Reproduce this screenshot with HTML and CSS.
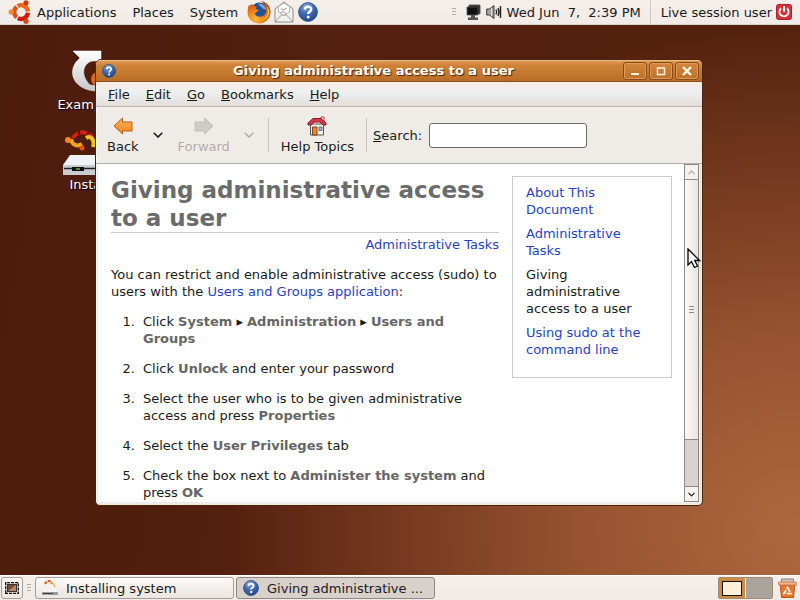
FILE: index.html
```html
<!DOCTYPE html>
<html lang="en">
<head>
<meta charset="utf-8">
<title>Giving administrative access to a user</title>
<link rel="stylesheet" href="styles.css">
</head>
<body>
<svg class="defs" aria-hidden="true">
  <defs>
    <radialGradient id="blue" cx=".4" cy=".2" r=".9"><stop offset="0" stop-color="#86a8d8"/><stop offset=".5" stop-color="#3c67ae"/><stop offset="1" stop-color="#1d3f80"/></radialGradient>
    <radialGradient id="fire" cx=".35" cy=".8" r=".9"><stop offset="0" stop-color="#f9b934"/><stop offset=".5" stop-color="#e8771a"/><stop offset="1" stop-color="#b63c0c"/></radialGradient>
    <linearGradient id="arrow" x2="0" y2="1"><stop offset="0" stop-color="#fbb45c"/><stop offset="1" stop-color="#f0821a"/></linearGradient>
    <linearGradient id="metal" x2="0" y2="1"><stop offset="0" stop-color="#ffffff"/><stop offset="1" stop-color="#c4c6ca"/></linearGradient>
    <symbol id="help" viewBox="0 0 20 20">
      <circle cx="10" cy="10" r="9.3" fill="url(#blue)" stroke="#274a83" stroke-width="1"/>
      <path d="M6.8 7.6C7 3.6 13.4 3.8 13.2 7.6C13.1 9.8 10.2 9.8 10.2 12" fill="none" stroke="#fff" stroke-width="2.4"/>
      <circle cx="10.2" cy="15" r="1.5" fill="#fff"/>
    </symbol>
    <symbol id="ubuntu" viewBox="0 0 24 24">
      <g fill="none" stroke-width="4.4">
        <path d="M9.6 6.1A7 7 0 0 1 20 11.4" stroke="#ea6a1c"/>
        <path d="M20 12.8A7 7 0 0 1 9.8 18.1" stroke="#cf1a12"/>
        <path d="M8.6 17.4A7 7 0 0 1 8.6 6.8" stroke="#d9551f"/>
      </g>
      <circle cx="3.2" cy="12" r="2.6" fill="#f08b2a"/>
      <circle cx="18" cy="2.8" r="2.6" fill="#cf3a12"/>
      <circle cx="18" cy="21.2" r="2.6" fill="#d9451a"/>
    </symbol>
    <symbol id="chevron" viewBox="0 0 10 6"><path d="M.7.7L5 5L9.3.7" fill="none" stroke="currentColor" stroke-width="1.6"/></symbol>
  </defs>
</svg>

<header class="panel panel-top">
  <nav class="menus">
    <svg class="ubuntu-logo"><use href="#ubuntu"/></svg>
    <button class="menu">Applications</button>
    <button class="menu">Places</button>
    <button class="menu">System</button>
  </nav>
  <div class="launchers">
    <button class="launcher" aria-label="Firefox">
      <svg viewBox="0 0 24 24"><circle cx="12.5" cy="12" r="9.5" fill="#27509a"/><path d="M11 4C15 3 19 6 19 10C16 9 14 7 11 4Z" fill="#6fa9dc"/><path d="M2 5C3 6 4 5 5 4C6 6 9 6 10 7C8 8 9 10 12 10C11 12 8 12 8 14C10 18 17 18 19 12C20 8 18 4 14 1C20 2 24 7 23.5 13C22.500 20 17 24 11.500 23.500C5 23 .5 18 .6 12C.7 9 1 7 2 5Z" fill="url(#fire)"/><path d="M19.500 6C22 12 21 17 15 20C20 19 23 15 22 10Z" fill="#fbd54a"/></svg>
    </button>
    <button class="launcher launcher-mail" aria-label="Mail">
      <svg viewBox="0 0 20 22"><path d="M1 8L10 1L19 8V21H1Z" fill="#f2f1ee" stroke="#8d8d88"/><path d="M4.500 10V5.500L10 2L15.500 5.500V11L10 14.500L4.500 11Z" fill="#fff" stroke="#aaa9a4" stroke-width=".8"/><path d="M1 21L7.500 14H12.500L19 21M6.500 7L9 9L13 7M6 12L9 10.500L13 13" fill="none" stroke="#9b9a95"/></svg>
    </button>
    <button class="launcher" aria-label="Help"><svg viewBox="0 0 20 20"><use href="#help"/></svg></button>
  </div>
  <div class="tray">
    <span class="grip"></span>
    <svg class="tray-icon" viewBox="0 0 16 18" role="img" aria-label="Network"><path d="M4 2H15V11H4Z" fill="#1c1c1c" stroke="#666"/><path d="M2 4H13V12H2Z" fill="#111" stroke="#555" stroke-width=".8"/><path d="M6 12H10V14.500H13V17H3V14.500H6Z" fill="#555"/></svg>
    <svg class="tray-icon tray-volume" viewBox="0 0 16 16" role="img" aria-label="Volume"><path d="M.7 5H3.500L8 1.500V14.500L3.500 11H.7Z" fill="#a5a59f" stroke="#3b3b38"/><path d="M5.500 4V12" stroke="#ddd"/><path d="M10 5.500Q11.300 8 10 10.500M12 4Q14 8 12 12M14.500 2V14" fill="none" stroke="#222" stroke-width="1.400"/></svg>
    <time class="clock">Wed Jun  7,  2:39 PM</time>
    <button class="session">Live session user
      <svg viewBox="0 0 16 16" aria-hidden="true"><rect x=".5" y=".5" width="15" height="15" rx="2" fill="#d6303a" stroke="#b11d2a"/><path d="M5 4.300A4.600 4.600 0 1 0 11 4.300" fill="none" stroke="#fff" stroke-width="1.800"/><path d="M8 2V8" stroke="#fff" stroke-width="2"/></svg>
    </button>
  </div>
</header>

<main class="desktop">
  <div class="shortcut shortcut-examples">
    <svg viewBox="0 0 48 42"><path d="M8 1H36V11H28C19 12 14 24 25 35L32 36V41C14 41 1 27 11 12L15 8Z" fill="url(#metal)" stroke="#eee" stroke-width=".6"/><circle cx="33" cy="29" r="7" fill="#e0661c"/></svg>
    <span>Examples</span>
  </div>
  <div class="shortcut shortcut-install">
    <svg viewBox="0 0 54 46"><g fill="none" stroke-width="4"><path d="M11 8C16 0 25 1 31 8" stroke="#d51d10" stroke-dasharray="7 2"/><path d="M9 9C10 15 15 17 20 14" stroke="#f0a51c"/><path d="M24 8C29 5 33 10 31 17" stroke="#f2c31e"/></g><circle cx="6" cy="10" r="3" fill="#f08a1c"/><circle cx="20" cy="18" r="2.500" fill="#e8500f"/><path d="M8 25H46L54 35H1Z" fill="#f1f2f4"/><path d="M1 35H54V45H1Z" fill="#c9ccd0"/><path d="M2 38.500H52" stroke="#20242a" stroke-width="1.500"/><rect x="10" y="37" width="12" height="4" fill="#111"/><path d="M14 39H18" stroke="#4f8a3c" stroke-width="2"/></svg>
    <span>Install</span>
  </div>

  <section class="window">
    <div class="titlebar">
      <svg class="title-icon"><use href="#help"/></svg>
      <h1 class="title">Giving administrative access to a user</h1>
      <div class="window-buttons">
        <button aria-label="Minimize"><svg viewBox="0 0 12 12"><path d="M2 9H10" stroke="#fff8e4" stroke-width="2"/></svg></button>
        <button aria-label="Maximize"><svg viewBox="0 0 12 12"><path d="M2.500 3H9.500V9.500H2.500Z" fill="none" stroke="#fff8e4" stroke-width="1.500"/></svg></button>
        <button aria-label="Close"><svg viewBox="0 0 12 12"><path d="M2 2L10 10M10 2L2 10" stroke="#fff8e4" stroke-width="2.400"/></svg></button>
      </div>
    </div>
    <nav class="menubar">
      <button><u>F</u>ile</button>
      <button><u>E</u>dit</button>
      <button><u>G</u>o</button>
      <button><u>B</u>ookmarks</button>
      <button><u>H</u>elp</button>
    </nav>
    <div class="toolbar">
      <button class="tool"><svg viewBox="0 0 20 18"><path d="M1 9L9.500 1V5H19V14H9.500V17Z" fill="url(#arrow)" stroke="#b8621a"/></svg>Back</button>
      <button class="drop" aria-label="Back history"><svg><use href="#chevron"/></svg></button>
      <button class="tool" disabled><svg viewBox="0 0 20 18"><path d="M19 9L10.500 1V5H1V14H10.500V17Z" fill="#cfccc8" stroke="#c2bfba"/></svg>Forward</button>
      <button class="drop drop-forward" aria-label="Forward history" disabled><svg><use href="#chevron"/></svg></button>
      <span class="separator"></span>
      <button class="tool tool-topics"><svg viewBox="0 0 20 20"><path d="M3.500 8H16.500V19H3.500Z" fill="#f4f1ea" stroke="#555"/><path d="M14 1H17V7H14Z" fill="#fff" stroke="#c33"/><path d="M5.500 11H10V19H5.500Z" fill="#ef8a2c" stroke="#7c4420"/><path d="M12 11H15V14.500H12Z" fill="#9db8d8" stroke="#4d5f7a" stroke-width=".8"/><path d="M1 9V7L6 2.500H14L19 7V9H16L13 6H7L4 9Z" fill="#d8384a" stroke="#8f1628"/></svg>Help Topics</button>
      <span class="separator"></span>
      <div class="search"><label for="q"><u>S</u>earch:</label><input id="q" type="text"></div>
    </div>
    <div class="viewer">
      <div class="page">
        <article class="doc">
          <h2>Giving administrative access to a user</h2>
          <p class="up"><a href="#tasks">Administrative Tasks</a></p>
          <p>You can restrict and enable administrative access (sudo) to users with the <a href="#users">Users and Groups application</a>:</p>
          <ol>
            <li>Click <b>System</b> ▸ <b>Administration</b> ▸ <b>Users and Groups</b></li>
            <li>Click <b>Unlock</b> and enter your password</li>
            <li>Select the user who is to be given administrative access and press <b>Properties</b></li>
            <li>Select the <b>User Privileges</b> tab</li>
            <li>Check the box next to <b>Administer the system</b> and press <b>OK</b></li>
          </ol>
        </article>
        <aside class="toc">
          <a href="#about">About This Document</a>
          <a href="#tasks">Administrative Tasks</a>
          <span>Giving administrative access to a user</span>
          <a href="#sudo">Using sudo at the command line</a>
        </aside>
      </div>
      <div class="scrollbar">
        <button class="step step-up" aria-label="Scroll up"><svg><use href="#chevron"/></svg></button>
        <div class="track"><div class="thumb"></div></div>
        <button class="step" aria-label="Scroll down"><svg><use href="#chevron"/></svg></button>
      </div>
    </div>
  </section>
  <svg class="pointer" viewBox="0 0 14 21" aria-hidden="true"><path d="M1 1V17L4.500 13.500L7.500 19.500L10.500 18L7.700 12.500H12.500Z" fill="#fff" stroke="#000" stroke-width="1.300"/></svg>
</main>

<footer class="panel panel-bottom">
  <button class="show-desktop" aria-label="Show desktop"><svg viewBox="0 0 14 12"><path d="M.7 11.300V.7H13.300V11.300Z" fill="#e8e2dc" stroke="#111" stroke-width="1.300" stroke-dasharray="3 1"/><rect x="2.500" y="2.500" width="9" height="7" fill="#7a4a38" stroke="#333"/><path d="M3 9L11 3V9Z" fill="#bd8468"/></svg></button>
  <span class="grip"></span>
  <button class="task"><svg viewBox="0 0 18 16"><path d="M4 4C6 0 10 0 11 4" fill="none" stroke="#e0592a" stroke-width="2" stroke-dasharray="3 1"/><path d="M9 2C12 2 13 4 14 7" fill="none" stroke="#efb55a" stroke-width="1.500"/><path d="M3 9H15L17 12H1Z" fill="#f4f4f4"/><path d="M1 12H17V15H1Z" fill="#9a9ca2"/><path d="M2 13.500H12" stroke="#444"/></svg><span>Installing system</span></button>
  <button class="task task-active"><svg viewBox="0 0 20 20"><use href="#help"/></svg><span>Giving administrative ...</span></button>
  <div class="pager"><span class="workspace workspace-active"><i></i></span><span class="workspace"></span></div>
  <button class="trash" aria-label="Trash"><svg viewBox="0 0 18 22"><path d="M3 6V2H15V6" fill="#c9c7c2" stroke="#96806c"/><path d="M1.500 6H16.500L15 20.500H3Z" fill="#e8772a" stroke="#b9551a"/><path d="M0 5H18V8H0Z" fill="#f0b184" stroke="#b9653a" stroke-width=".6"/><path d="M9 10.500L12.500 16.500H5.500Z" fill="none" stroke="#fff" stroke-width="1.700" stroke-dasharray="5 1.500"/></svg></button>
</footer>
</body>
</html>
```
FILE: styles.css
```css
:root {
  --ink: #1a1a1a;
  --panel: #efece8;
  --link: #2a3fc4;
}

* { box-sizing: border-box; }

body {
  margin: 0;
  min-height: 100vh;
  display: flex;
  flex-direction: column;
  overflow: hidden;
  color: var(--ink);
  font: 13px/17px "DejaVu Sans", sans-serif;
  background: #54200f;
}

button {
  padding: 0;
  border: 0;
  background: none;
  color: inherit;
  font: inherit;
  white-space: nowrap;
}

svg { display: block; flex: none; }
a { color: var(--link); text-decoration: none; }
.defs { position: absolute; width: 0; height: 0; }

/* Panels */
.panel { display: flex; align-items: center; background: linear-gradient(#f4efea, #f0ebe6); }
.panel-top { height: 25px; border-bottom: 1px solid #d9d2cb; padding: 0 8px; }
.panel-bottom { height: 25px; border-top: 1px solid #fff; padding: 0 3px 0 1px; gap: 2px; }
.menus { display: flex; align-items: center; gap: 16px; }
.ubuntu-logo { width: 24px; height: 24px; margin-right: -11px; }
.launchers { display: flex; align-items: center; gap: 3px; margin-left: 9px; }
.launcher svg { width: 24px; height: 24px; }
.launcher-mail svg { width: 20px; }
.launcher:last-child svg { width: 20px; height: 20px; margin-left: 1px; }
.tray { display: flex; align-items: center; align-self: stretch; margin-left: auto; gap: 5px; }
.tray-icon { width: 16px; height: 18px; }
.tray .grip { margin-right: 4px; }
.grip { width: 4px; height: 8px; background: repeating-linear-gradient(#b0aaa4 0 1px, transparent 1px 3px); }
.clock { white-space: pre; }
.session {
  display: flex;
  align-items: center;
  align-self: stretch;
  gap: 4px;
  margin-left: 4px;
  padding-left: 10px;
  border-left: 1px solid #cfc9c3;
}
.session svg { width: 16px; height: 16px; }

/* Desktop */
.desktop {
  position: relative;
  flex: 1;
  background:
    radial-gradient(ellipse 72% 92% at 100% 92%, #ad683f 0%, rgba(168, 96, 56, .8) 38%, transparent 100%),
    linear-gradient(100deg, #4c1c0c 0%, #55200f 45%, #54220f 100%);
}
.shortcut {
  position: absolute;
  display: flex;
  flex-direction: column;
  align-items: center;
  width: 64px;
  color: #fff;
  text-shadow: 1px 1px 1px #000;
}
.shortcut-examples { left: 57px; top: 25px; gap: 4px; }
.shortcut-examples svg { width: 48px; height: 42px; }
.shortcut-install { left: 57px; top: 105px; }
.shortcut-install svg { width: 54px; height: 46px; }

/* Window */
.window {
  position: absolute;
  inset: 34px 97px 69px 95px;
  display: flex;
  flex-direction: column;
  overflow: hidden;
  border: 1px solid #4a2412;
  border-radius: 6px 6px 5px 5px;
  background: var(--panel);
  box-shadow: inset 1px 0 #fbf8f0, inset -2px -1px #f3ead6;
}
.titlebar {
  display: flex;
  align-items: center;
  height: 22px;
  padding: 0 3px 0 6px;
  background: linear-gradient(#e3a05e, #cf8238 25%, #c67a30 60%, #b86c26);
  border-bottom: 1px solid #8a4e1c;
  box-shadow: inset 0 1px #eab984;
}
.title-icon { width: 14px; height: 14px; }
.title {
  flex: 1;
  margin: 0 0 0 8px;
  color: #fff;
  font-size: 13px;
  line-height: 17px;
  text-align: center;
  text-shadow: 1px 1px 1px #4a2404;
}
.window-buttons { display: flex; gap: 2px; }
.window-buttons button {
  display: grid;
  place-items: center;
  width: 24px;
  height: 18px;
  border: 1px solid #8a4a16;
  border-radius: 3px;
  box-shadow: inset 0 0 0 1px #dc9d5c;
}
.window-buttons svg { width: 12px; height: 12px; }
.menubar {
  display: flex;
  gap: 16px;
  height: 25px;
  padding: 0 12px;
  background: linear-gradient(#f7ece2, #eef0f0 40%, #e2deda);
  border-bottom: 1px solid #bdb7b0;
}
.toolbar { display: flex; align-items: center; height: 57px; padding: 0 11px; border-bottom: 1px solid #b5afa8; }
.tool { display: flex; flex-direction: column; align-items: center; gap: 2px; }
.tool svg { width: 20px; height: 20px; }
.tool:disabled, .drop:disabled { color: #b3aea9; }
.drop { margin: 0 15px 0 14px; }
.drop svg { width: 10px; height: 6px; }
.separator { width: 1px; height: 34px; background: #c8c2bb; }
.tool-topics { margin: 0 12px; }
.search { display: flex; align-items: center; gap: 7px; padding-left: 6px; }
.search input {
  width: 158px;
  height: 25px;
  border: 1px solid #6e6a66;
  border-radius: 3px;
  background: #fff;
  font: inherit;
}
.drop-forward { margin-right: 14px; }

/* Document viewer */
.viewer { flex: 1; min-height: 0; display: flex; margin: 0 3px 3px 2px; background: #fff; }
.page { flex: 1; display: flex; align-items: flex-start; gap: 13px; padding: 12px 12px 0 13px; overflow: hidden; }
.doc { flex: 1; }
.doc h2 {
  margin: 0 0 3px;
  border-bottom: 1px solid #ccc;
  color: #6b6b6b;
  font-size: 23px;
  line-height: 28px;
}
.doc p { margin: 0 0 13px; }
.doc .up { text-align: right; }
.doc b { color: #666; }
.doc ol { display: grid; gap: 13px; margin: 0; padding-left: 28px; }
.doc li { padding-left: 4px; }
.toc {
  display: flex;
  flex-direction: column;
  gap: 7px;
  width: 160px;
  min-height: 202px;
  padding: 7px 13px;
  border: 1px solid #ccc;
}
.scrollbar { display: flex; flex-direction: column; width: 15px; border: 1px solid #8f8a84; background: #d9d3ce; }
.step { display: grid; place-items: center; height: 14px; background: #f4f2ef; }
.step svg { width: 7px; height: 5px; }
.step-up svg { transform: rotate(180deg); color: #aaa49e; }
.track { flex: 1; border: solid #8f8a84; border-width: 1px 0; }
.thumb {
  height: 85%;
  border-bottom: 1px solid #8f8a84;
  background:
    repeating-linear-gradient(#8f8a84 0 1px, transparent 1px 3px) center / 5px 7px no-repeat,
    linear-gradient(90deg, #fbfaf8, #e8e4e0);
}
.pointer { position: absolute; left: 687px; top: 223px; width: 14px; height: 21px; }

/* Bottom panel */
.show-desktop, .task { border: 1px solid #a79f97; border-radius: 3px; background: linear-gradient(#fbf9f7, #ebe6e1); }
.show-desktop { display: grid; place-items: center; width: 22px; height: 22px; }
.show-desktop svg { width: 14px; height: 12px; }
.panel-bottom .grip { margin: 0 2px; }
.task { display: flex; align-items: center; gap: 7px; width: 199px; height: 22px; padding: 0 5px; }
.task svg { width: 18px; height: 16px; }
.task-active { background: #d8d0ca; border-color: #8f8780; }
.pager { display: flex; gap: 1px; margin-left: auto; border: 1px solid #a08a70; border-radius: 2px; background: #f4efe8; }
.workspace { display: grid; place-items: center; width: 26px; height: 20px; background: #aaa39b; }
.workspace-active { background: #c98e44; }
.workspace-active i { width: 20px; height: 15px; border: 1px solid #1a1008; background: #fdf2d8; }
.trash { margin-left: 3px; }
.trash svg { width: 19px; height: 22px; }
```
